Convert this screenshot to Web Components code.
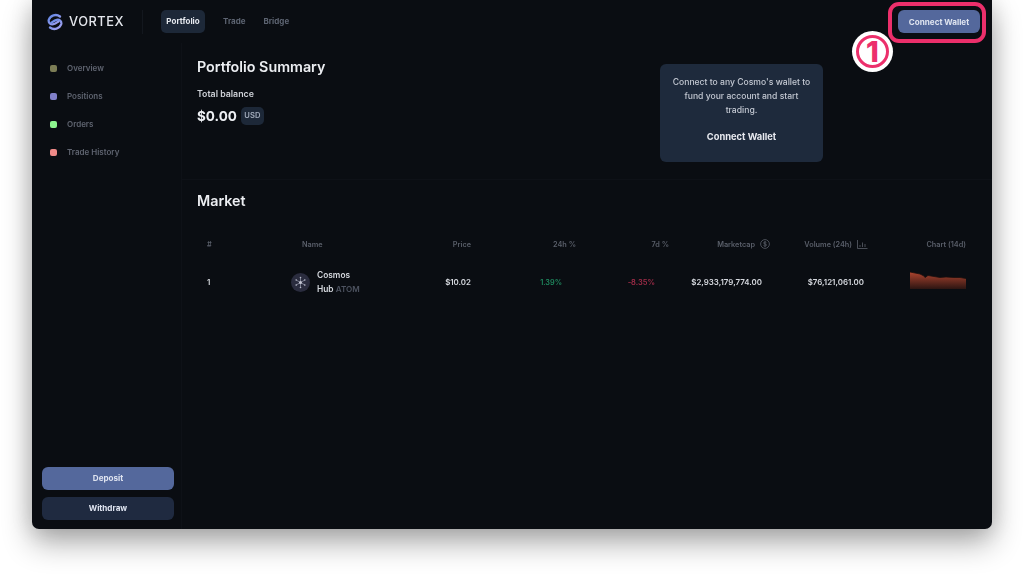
<!DOCTYPE html>
<html lang="en">
<head>
<meta charset="utf-8">
<title>Vortex</title>
<style>
    html, body { margin: 0; height: 100%; background: #fff; overflow: hidden; }
    body { font-family: "Inter", "Open Sans", sans-serif; }
</style>
</head>
<body>
<vx-app>
    <vx-header slot="header"></vx-header>
    <vx-sidebar slot="sidebar">
        <vx-side-item color="#7c7d56">Overview</vx-side-item>
        <vx-side-item color="#8180c9">Positions</vx-side-item>
        <vx-side-item color="#8df58f">Orders</vx-side-item>
        <vx-side-item color="#ef8a88">Trade History</vx-side-item>
        <vx-button slot="actions" variant="primary" wide>Deposit</vx-button>
        <vx-button slot="actions" variant="dark" wide>Withdraw</vx-button>
    </vx-sidebar>
    <vx-summary slot="main"></vx-summary>
    <vx-market slot="main"></vx-market>
</vx-app>
<vx-callout></vx-callout>

<script>
class VxApp extends HTMLElement {
    constructor() {
        super();
        this.attachShadow({ mode: 'open' });
        this.shadowRoot.innerHTML = `
            <style>
                :host {
                    display: flex;
                    flex-direction: column;
                    width: 960px;
                    height: 529px;
                    margin-left: 32px;
                    background: #0a0d12;
                    border-radius: 0 0 7px 7px;
                    box-shadow: 0 14px 30px rgba(0, 0, 0, 0.32), 0 0 22px rgba(0, 0, 0, 0.14);
                    overflow: hidden;
                    color: #e8eaf0;
                    font-family: "Inter", "Open Sans", sans-serif;
                }
                .body { display: flex; flex: 1; min-height: 0; filter: blur(0.3px); }
                .main { flex: 1; min-width: 0; display: flex; flex-direction: column; }
                .top { filter: blur(0.3px); }
            </style>
            <div class="top"><slot name="header"></slot></div>
            <div class="body">
                <slot name="sidebar"></slot>
                <div class="main"><slot name="main"></slot></div>
            </div>
        `;
    }
}

class VxButton extends HTMLElement {
    constructor() {
        super();
        this.attachShadow({ mode: 'open' });
        this.shadowRoot.innerHTML = `
            <style>
                :host {
                    display: flex;
                    align-items: center;
                    justify-content: center;
                    box-sizing: border-box;
                    width: 82px;
                    height: 23px;
                    border-radius: 6px;
                    font-size: 8.1px;
                    font-weight: 700;
                    color: #dfe4f0;
                    background: #54689c;
                }
                :host([wide]) { width: 132px; padding-bottom: 2px; }
                :host([variant="dark"]) { background: #1f2a40; }
            </style>
            <slot></slot>
        `;
    }
}

class VxHeader extends HTMLElement {
    constructor() {
        super();
        this.attachShadow({ mode: 'open' });
        this.shadowRoot.innerHTML = `
            <style>
                :host {
                    display: flex;
                    align-items: center;
                    height: 43px;
                    flex: none;
                    padding: 0 12px 0 15px;
                }
                .logo { display: block; margin-right: 6px; }
                .name {
                    width: 73px;
                    font-size: 12.8px;
                    font-weight: 500;
                    letter-spacing: 0.55px;
                    color: #e4e6ec;
                }
                .sep { width: 1px; height: 24px; background: #13171e; margin-right: 18px; }
                nav { display: flex; align-items: center; flex: 1; font-size: 8px; font-weight: 700; color: #5d6472; }
                .tab { padding: 0 5px; line-height: 23px; }
                .active {
                    width: 44px;
                    box-sizing: border-box;
                    padding: 0;
                    text-align: center;
                    color: #e6e9ef;
                    background: #1d2838;
                    border-radius: 5px;
                    margin-right: 13px;
                }
                .trade { margin-right: 8px; }
            </style>
            <svg class="logo" width="16" height="18" viewBox="0 0 16 18" fill="none">
                <defs>
                    <linearGradient id="lg" x1="0" y1="0" x2="1" y2="1">
                        <stop offset="0" stop-color="#5f86e6"/>
                        <stop offset="1" stop-color="#a9a4ef"/>
                    </linearGradient>
                </defs>
                <path d="M13 3.500A7.300 7.300 0 0 0 1.700 7C1.300 9.800 3.500 11.700 6.300 11.200 8.300 10.800 9.800 9.600 11.400 8.500" stroke="url(#lg)" stroke-width="2.300" stroke-linecap="round"/>
                <path d="M3 14.500A7.300 7.300 0 0 0 14.300 11C14.700 8.200 12.500 6.300 9.700 6.800 7.700 7.200 6.200 8.400 4.600 9.500" stroke="url(#lg)" stroke-width="2.300" stroke-linecap="round"/>
            </svg>
            <span class="name">VORTEX</span>
            <span class="sep"></span>
            <nav>
                <span class="tab active">Portfolio</span>
                <span class="tab trade">Trade</span>
                <span class="tab">Bridge</span>
            </nav>
            <vx-button>Connect Wallet</vx-button>
        `;
    }
}

class VxSidebar extends HTMLElement {
    constructor() {
        super();
        this.attachShadow({ mode: 'open' });
        this.shadowRoot.innerHTML = `
            <style>
                :host {
                    display: flex;
                    flex-direction: column;
                    flex: none;
                    box-sizing: border-box;
                    width: 150px;
                    padding: 11px 8px 9px 10px;
                    border-right: 1px solid #0e1117;
                }
                .items { display: flex; flex-direction: column; flex: 1; }
                .actions { display: flex; flex-direction: column; gap: 7px; }
            </style>
            <div class="items"><slot></slot></div>
            <div class="actions"><slot name="actions"></slot></div>
        `;
    }
}

class VxSideItem extends HTMLElement {
    constructor() {
        super();
        this.attachShadow({ mode: 'open' });
        const color = this.getAttribute('color') || '#888';
        this.shadowRoot.innerHTML = `
            <style>
                :host {
                    display: flex;
                    align-items: center;
                    height: 28px;
                    padding-left: 8px;
                    font-size: 8px;
                    font-weight: 600;
                    color: #5f6470;
                }
                i { width: 7px; height: 7px; border-radius: 2px; background: ${color}; margin-right: 10px; }
            </style>
            <i></i><slot></slot>
        `;
    }
}

class VxSummary extends HTMLElement {
    constructor() {
        super();
        this.attachShadow({ mode: 'open' });
        this.shadowRoot.innerHTML = `
            <style>
                :host {
                    display: flex;
                    flex: none;
                    box-sizing: border-box;
                    height: 137px;
                    padding: 21px 0 0 15px;
                    border-bottom: 1px solid #0e1117;
                }
                .left { width: 463px; flex: none; margin-top: -7px; }
                h2 { margin: 0; font-size: 14.300px; line-height: 20px; font-weight: 600; color: #eceef2; }
                .label { margin-top: 11px; font-size: 8.800px; line-height: 12px; font-weight: 600; color: #cfd2d8; }
                .balance { display: flex; align-items: center; gap: 4px; margin-top: 7px; }
                .value { font-size: 13.500px; line-height: 18px; font-weight: 700; color: #eef0f4; }
                .pill {
                    width: 23px;
                    text-align: center;
                    line-height: 18px;
                    font-size: 7.600px;
                    font-weight: 600;
                    color: #a4adbd;
                    background: #1d2838;
                    border-radius: 5px;
                }
                .card {
                    box-sizing: border-box;
                    width: 163px;
                    height: 98px;
                    padding: 11px 0 0;
                    text-align: center;
                    background: #1e2a3c;
                    border-radius: 6px;
                    font-size: 8.600px;
                    font-weight: 500;
                    line-height: 14px;
                    color: #c3c8d2;
                }
                .card b { display: block; margin-top: 13px; font-size: 9.300px; font-weight: 700; color: #e8eaf0; }
            </style>
            <div class="left">
                <h2>Portfolio Summary</h2>
                <div class="label">Total balance</div>
                <div class="balance"><span class="value">$0.00</span><span class="pill">USD</span></div>
            </div>
            <div class="card">
                Connect to any Cosmo's wallet to<br>fund your account and start<br>trading.
                <b>Connect Wallet</b>
            </div>
        `;
    }
}

class VxSpark extends HTMLElement {
    constructor() {
        super();
        this.attachShadow({ mode: 'open' });
        this.shadowRoot.innerHTML = `
            <style>:host { display: block; width: 56px; height: 18px; } svg { display: block; }</style>
            <svg width="56" height="18" viewBox="0 0 56 18">
                <defs>
                    <linearGradient id="sg" x1="0" y1="0" x2="0" y2="1">
                        <stop offset="0" stop-color="#ad442f"/>
                        <stop offset="1" stop-color="#2c1512"/>
                    </linearGradient>
                </defs>
                <path d="M0 1 L5 2 L10 3 L14 5 L15 6.500 L18 4.500 L24 5.500 L30 6.500 L36 6 L44 6.500 L50 6.500 L56 7.500 V18 H0 Z" fill="url(#sg)"/>
                <path d="M0 1 L5 2 L10 3 L14 5 L15 6.500 L18 4.500 L24 5.500 L30 6.500 L36 6 L44 6.500 L50 6.500 L56 7.500" fill="none" stroke="#1a0f0e" stroke-width="0.800"/>
            </svg>
        `;
    }
}

class VxMarket extends HTMLElement {
    constructor() {
        super();
        this.attachShadow({ mode: 'open' });
        this.shadowRoot.innerHTML = `
            <style>
                :host { display: block; padding: 11px 0 0 15px; }
                h2 { margin: 0 0 23px; font-size: 14.300px; line-height: 20px; font-weight: 600; color: #eceef2; }
                .row {
                    display: grid;
                    grid-template-columns: 80px 104px 90px 105px 93px 101px 98px 98px;
                    align-items: center;
                    text-align: right;
                }
                .head { height: 20px; font-size: 7.300px; font-weight: 600; color: #5a5f6a; }
                .cells { height: 56px; font-size: 7.900px; font-weight: 600; color: #d6d9df; }
                .first { text-align: left; padding-left: 10px; }
                .name-head { text-align: left; padding-left: 25px; }
                .ic { display: inline-flex; align-items: center; justify-content: flex-end; gap: 5px; }
                .ic svg { display: block; }
                .coin { display: flex; align-items: center; gap: 7px; padding-left: 14px; text-align: left; line-height: 14px; font-size: 8.400px; }
                .coin svg { flex: none; display: block; }
                .coin small { font-size: 8.100px; color: #4d5360; }
                .up { color: #1f8a5f; padding-right: 14px; font-size: 7.300px; }
                .down { color: #a02c48; padding-right: 14px; font-size: 7.500px; }
                .cap { padding-right: 8px; }
                .vol { padding-right: 4px; }
                vx-spark { margin-left: auto; margin-top: -4px; }
            </style>
            <h2>Market</h2>
            <div class="row head">
                <span class="first">#</span>
                <span class="name-head">Name</span>
                <span>Price</span>
                <span>24h %</span>
                <span>7d %</span>
                <span class="ic">Marketcap
                    <svg width="10" height="10" viewBox="0 0 10 10" fill="none" stroke="#5a5f6a" stroke-width="0.800">
                        <circle cx="5" cy="5" r="4.400"/>
                        <path d="M6.400 3.600C6 3 5.400 2.900 5 2.900 4.200 2.900 3.600 3.400 3.600 4 3.600 5.400 6.500 4.600 6.500 6 6.500 6.700 5.800 7.100 5 7.100 4.400 7.100 3.800 6.900 3.500 6.400M5 2.200V7.800"/>
                    </svg>
                </span>
                <span class="ic">Volume (24h)
                    <svg width="11" height="9" viewBox="0 0 11 9" fill="none" stroke="#5a5f6a" stroke-width="0.800">
                        <path d="M.5 0V8.500H10.500M3 5V7M5.500 2.500V7M8 4V7"/>
                    </svg>
                </span>
                <span>Chart (14d)</span>
            </div>
            <div class="row cells">
                <span class="first">1</span>
                <div class="coin">
                    <svg width="19" height="19" viewBox="0 0 19 19">
                        <circle cx="9.500" cy="9.500" r="9.500" fill="#2a2c3e"/>
                        <g stroke="#9a9db0" stroke-width="0.700" stroke-linecap="round">
                            <path d="M9.500 4.500V14.500M5.200 7L13.800 12M5.200 12L13.800 7"/>
                        </g>
                        <circle cx="9.500" cy="9.500" r="1.500" fill="#c5c7d4"/>
                        <circle cx="9.500" cy="4.500" r="0.800" fill="#b5b8c6"/>
                        <circle cx="9.500" cy="14.500" r="0.800" fill="#b5b8c6"/>
                        <circle cx="5.200" cy="7" r="0.800" fill="#b5b8c6"/>
                        <circle cx="13.800" cy="12" r="0.800" fill="#b5b8c6"/>
                        <circle cx="5.200" cy="12" r="0.800" fill="#b5b8c6"/>
                        <circle cx="13.800" cy="7" r="0.800" fill="#b5b8c6"/>
                    </svg>
                    <span>Cosmos<br>Hub <small>ATOM</small></span>
                </div>
                <span>$10.02</span>
                <span class="up">1.39%</span>
                <span class="down">-8.35%</span>
                <span class="cap">$2,933,179,774.00</span>
                <span class="vol">$76,121,061.00</span>
                <vx-spark></vx-spark>
            </div>
        `;
    }
}

// tutorial annotation drawn over the screenshot
class VxCallout extends HTMLElement {
    constructor() {
        super();
        this.attachShadow({ mode: 'open' });
        this.shadowRoot.innerHTML = `
            <style>
                :host { display: block; position: absolute; left: 0; top: 0; }
                .frame {
                    position: absolute;
                    left: 888px;
                    top: 2px;
                    width: 98px;
                    height: 41px;
                    box-sizing: border-box;
                    border: 4px solid #ec2f6b;
                    border-radius: 11px;
                }
                .badge {
                    position: absolute;
                    left: 852px;
                    top: 31px;
                    width: 41px;
                    height: 41px;
                    box-sizing: border-box;
                    border-radius: 50%;
                    background: #fff;
                    padding: 4px;
                }
                .ring {
                    display: flex;
                    align-items: center;
                    justify-content: center;
                    height: 100%;
                    box-sizing: border-box;
                    border: 3px solid #ec2f6b;
                    border-radius: 50%;
                    font: 800 29px/1 "Inter", sans-serif;
                    color: #ec2f6b;
                }
            </style>
            <div class="frame"></div>
            <div class="badge"><div class="ring">1</div></div>
        `;
    }
}

customElements.define('vx-app', VxApp);
customElements.define('vx-button', VxButton);
customElements.define('vx-header', VxHeader);
customElements.define('vx-sidebar', VxSidebar);
customElements.define('vx-side-item', VxSideItem);
customElements.define('vx-summary', VxSummary);
customElements.define('vx-spark', VxSpark);
customElements.define('vx-market', VxMarket);
customElements.define('vx-callout', VxCallout);
</script>
</body>
</html>
